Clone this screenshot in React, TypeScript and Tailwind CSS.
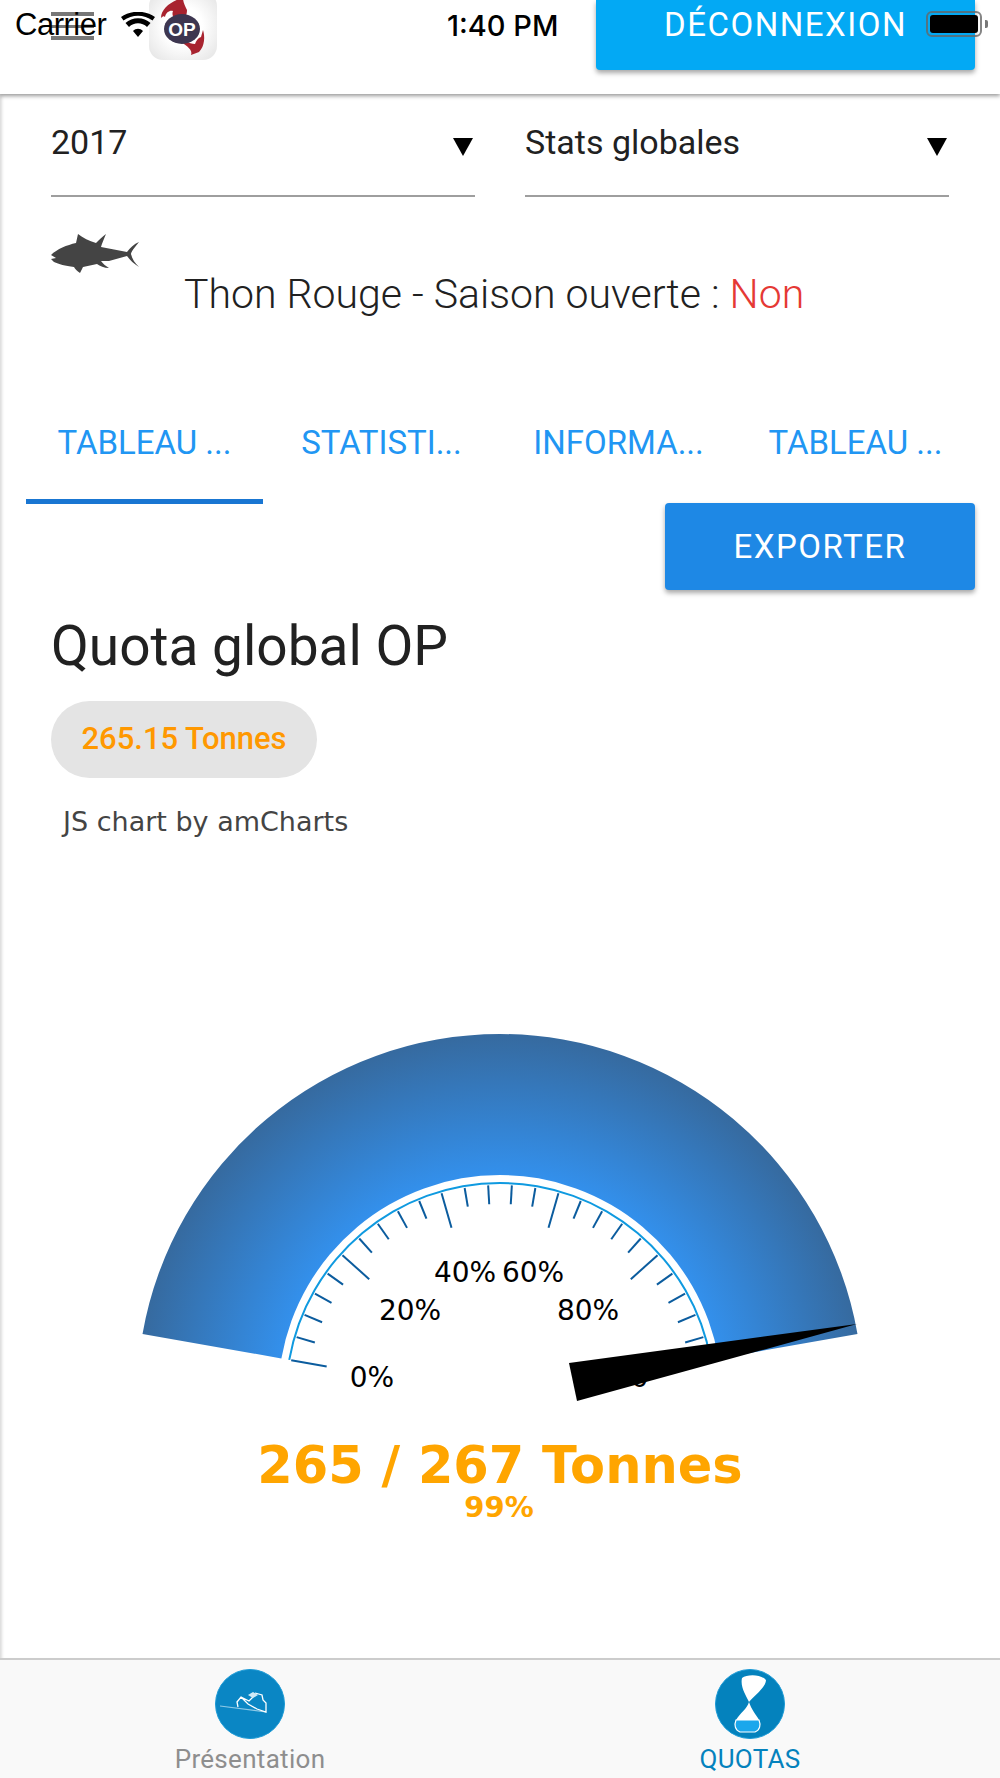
const C = { x: 500, y: 1397 }

function polar(r: number, deg: number) {
  const a = (deg * Math.PI) / 180
  return { x: C.x + r * Math.sin(a), y: C.y - r * Math.cos(a) }
}

function arcBand(outer: number, inner: number, from: number, to: number) {
  const a = polar(outer, from)
  const b = polar(outer, to)
  const c = polar(inner, to)
  const d = polar(inner, from)
  return `M${a.x} ${a.y}A${outer} ${outer} 0 0 1 ${b.x} ${b.y}L${c.x} ${c.y}A${inner} ${inner} 0 0 0 ${d.x} ${d.y}Z`
}

const TOP = 1020
const ticks = Array.from({ length: 26 }, (_, i) => i)
const labels = [
  { t: '0%', x: 372, y: 1387 },
  { t: '20%', x: 410, y: 1320 },
  { t: '40%', x: 465, y: 1282 },
  { t: '60%', x: 533, y: 1282 },
  { t: '80%', x: 588, y: 1320 },
]

function Gauge() {
  return (
    <svg width="1000" height="520" viewBox={`0 ${TOP} 1000 520`} className="block shrink-0">
      <defs>
        <radialGradient id="band" gradientUnits="userSpaceOnUse" cx={C.x} cy={C.y} r="363">
          <stop offset="0.6" stopColor="#3391ee" />
          <stop offset="1" stopColor="#366a9f" />
        </radialGradient>
        <clipPath id="last-label">
          <rect x="560" y="1340" width="90" height="60" />
        </clipPath>
      </defs>
      <path d={arcBand(363, 222, -80, 80)} fill="url(#band)" />
      <path d={arcBand(215, 213, -80, 80)} fill="#0f9ae0" />
      {ticks.map(i => {
        const deg = -80 + i * 6.4
        const major = i % 5 === 0
        const a = polar(212, deg)
        const b = polar(major ? 176 : 193, deg)
        return <line key={i} x1={a.x} y1={a.y} x2={b.x} y2={b.y} stroke="#0b5c9e" strokeWidth="2" />
      })}
      {labels.map(l => (
        <text key={l.t} x={l.x} y={l.y} textAnchor="middle" fontSize="28" fill="#000" fontFamily="'DejaVu Sans', sans-serif">
          {l.t}
        </text>
      ))}
      {/* the needle covers nearly all of this one */}
      <text x="595" y="1387" fontSize="28" fill="#000" clipPath="url(#last-label)" fontFamily="'DejaVu Sans', sans-serif">
        100%
      </text>
      <polygon points="857,1324 569,1363 577,1401" fill="#000" />
      <text x="500" y="1483" textAnchor="middle" fontSize="51" fontWeight="700" fill="#ffa500" fontFamily="'DejaVu Sans', sans-serif">
        265 / 267 Tonnes
      </text>
      <text x="499" y="1517" textAnchor="middle" fontSize="29" fontWeight="700" fill="#ffa500" fontFamily="'DejaVu Sans', sans-serif">
        99%
      </text>
    </svg>
  )
}

function TunaIcon() {
  return (
    <svg width="90" height="41" viewBox="0 0 90 41" fill="#444" className="shrink-0">
      <path d="M0 22 C6 16 16 12 25 10 L27 1 C32 5 38 8 45 10 C48 7 51 4 55 1 C53 6 51 10 50 14 L76 19 C79 15 83 11 88 9 C83 15 80 19 80 21 C81 26 84 30 88 34 C83 31 79 27 76 23 L58 28 L50 28 C52 31 55 33 58 35 C53 35 49 33 46 31 L32 34 L29 40 C26 38 24 36 23 34 C14 33 8 31 3 29 L0 26 L5 25 Z" />
    </svg>
  )
}

function AppIcon() {
  return (
    <div className="w-[68px] h-[68px] rounded-[14px] bg-[radial-gradient(circle,#ffffff_40%,#e2e2e2_100%)] -mt-2">
      <svg width="68" height="68" viewBox="0 0 68 68">
        <path d="M34 6 C24 8 12 16 12 26 C14 24 15 24 16 25 C17 20 21 18 24 19 C22 24 26 28 30 28 C36 26 38 24 38 18 C36 14 34 10 34 6 Z" fill="#a8232f" />
        <path d="M32 42 C34 48 40 52 46 52 C47 49 49 46 52 45 L54 38 C56 44 56 54 50 60 L42 63 C44 58 38 54 32 50 C30 48 30 44 32 42 Z" fill="#a8232f" />
        <ellipse cx="33" cy="37" rx="18" ry="15" fill="#3d3650" />
        <text x="33" y="44" textAnchor="middle" fontSize="19" fontWeight="700" fill="#fff" fontFamily="'Liberation Sans', sans-serif">OP</text>
      </svg>
    </div>
  )
}

function BoatIcon() {
  return (
    <svg width="70" height="70" viewBox="0 0 70 70">
      <circle cx="35" cy="35" r="34.5" fill="#0a86c4" stroke="#1b9ad6" strokeWidth="1" />
      <path d="M5 37 L51 43" stroke="#8ec9e6" strokeWidth="1.2" fill="none" />
      <path d="M23 38 L22 33 L26 28 L34 32 L38 28 M26 28 L33 35 L42 40 L51 43 L51 34 L48 31 L47 26 L40 24" stroke="#fff" strokeWidth="1.3" fill="none" />
      <path d="M33 26 L38 23 L43 26 L38 29 Z" fill="#cfe9f6" />
    </svg>
  )
}

function HourglassIcon() {
  return (
    <svg width="70" height="70" viewBox="0 0 70 70">
      <circle cx="35" cy="35" r="34.5" fill="#0482bd" stroke="#1b9ad6" strokeWidth="1" />
      <path d="M27 9 C32 5 46 5 51 11 C51 18 40 26 34 33 C31 26 25 18 27 9 Z" fill="#fff" />
      <path d="M34 33 C36 40 42 47 44 51 L21 51 C25 44 32 40 34 33 Z" fill="#fff" />
      <path d="M21 51 L44 51 C46 56 45 61 40 63 L25 63 C20 61 19 56 21 51 Z" fill="#1ba7ec" stroke="#fff" strokeWidth="1.2" />
    </svg>
  )
}

function Select({ label }: { label: string }) {
  return (
    <div className="w-[424px] h-[85px] border-b-2 border-[#9e9e9e] flex items-center justify-between pb-[22px] pr-[2px]">
      <span className="text-[34px] text-[#212121]">{label}</span>
      <span className="mt-[8px] w-0 h-0 border-l-[10px] border-r-[10px] border-t-[18px] border-l-transparent border-r-transparent border-t-black" />
    </div>
  )
}

export default function App() {
  return (
    <div className="relative w-[1000px] h-[1778px] overflow-hidden bg-white font-['Roboto',sans-serif] flex flex-col">
      {/* status bar sits over the app header */}
      <div className="absolute inset-x-0 top-0 h-10 z-10 font-['Liberation_Sans',sans-serif] text-black">
        <span className="absolute left-[15px] top-[8px] text-[31px] leading-[34px] tracking-[-0.5px]">Carrier</span>
        <svg className="absolute left-[121px] top-[12px]" width="34" height="26" viewBox="0 0 34 26">
          <path d="M17 25 L12 19 C15 16 19 16 22 19 Z M8 15 L4.500 11 C11 4.500 23 4.500 29.500 11 L26 15 C21 10 13 10 8 15 Z M2.500 8.500 L0 5 C9 -2 25 -2 34 5 L31.500 8.500 C23 2 11 2 2.500 8.500 Z" fill="#000" />
        </svg>
        <span className="absolute left-[447px] top-[9px] text-[29px] leading-[34px] font-medium font-['Inter',sans-serif]">1:40 PM</span>
        <div className="absolute left-[926px] top-[11px] w-[56px] h-[26px] rounded-[6px] border-2 border-[#666]/80 p-[2px]">
          <div className="w-full h-full rounded-[3px] bg-black" />
        </div>
        <div className="absolute left-[985px] top-[20px] w-[3px] h-[8px] rounded-r-[2px] bg-[#777]" />
      </div>

      <header className="h-[94px] shrink-0 flex items-start pl-[51px] pr-[25px] bg-white shadow-[0_2px_4px_rgba(0,0,0,0.4)] relative">
        <div className="w-[43px] h-[28px] mt-[12px] flex flex-col justify-between">
          <div className="h-[4px] bg-[#777]" />
          <div className="h-[3px] bg-[#777]" />
          <div className="h-[4px] bg-[#777]" />
        </div>
        <div className="ml-[55px]"><AppIcon /></div>
        <button className="ml-auto w-[379px] h-[70px] bg-[#03a9f4] rounded-b-[4px] text-white text-[33px] tracking-[1.5px] pb-[22px] shadow-[0_3px_5px_rgba(0,0,0,0.35)]">
          DÉCONNEXION
        </button>
      </header>

      <main className="flex-1 flex flex-col shadow-[inset_4px_0_3px_-2px_rgba(0,0,0,0.14)]">
        <div className="flex gap-[50px] pl-[51px] pt-[18px]">
          <Select label="2017" />
          <Select label="Stats globales" />
        </div>

        <div className="h-[169px] pl-[51px] pt-[36px] flex items-start">
          <TunaIcon />
          <p className="ml-[43px] mt-[36px] text-[41px] leading-[50px] font-light text-[#212121] whitespace-nowrap">
            Thon Rouge - Saison ouverte : <span className="text-[#e53935]">Non</span>
          </p>
        </div>

        <nav className="mt-[26px] pl-[26px] flex h-[112px]">
          {['TABLEAU ...', 'STATISTI...', 'INFORMA...', 'TABLEAU ...'].map((t, i) => (
            <div
              key={i}
              className={`w-[237px] flex items-center justify-center pt-[2px] pb-[8px] text-[33px] text-[#2196f3] ${i === 0 ? 'border-b-[5px] border-[#1976d2]' : 'border-b-[5px] border-transparent'}`}
            >
              {t}
            </div>
          ))}
        </nav>

        <div className="flex justify-end pr-[25px]">
          <button className="w-[310px] h-[87px] -mt-[1px] bg-[#1e88e5] text-white text-[33px] tracking-[1.5px] rounded-[4px] shadow-[0_3px_5px_rgba(0,0,0,0.35)]">
            EXPORTER
          </button>
        </div>

        <h1 className="pl-[51px] mt-[21px] text-[55px] leading-[70px] text-[#212121]">Quota global OP</h1>

        <div className="pl-[51px] mt-[20px]">
          <span className="inline-flex items-center justify-center w-[266px] h-[77px] rounded-full bg-[#e4e4e4] text-[#ff9800] text-[31px] font-medium">
            265.15 Tonnes
          </span>
        </div>

        <p className="pl-[63px] mt-[26px] text-[27px] leading-[36px] text-[#444] font-['DejaVu_Sans',sans-serif]">JS chart by amCharts</p>

        <div className="mt-[180px]"><Gauge /></div>
      </main>

      <footer className="h-[120px] shrink-0 bg-[#f9f9f9] border-t-2 border-[#cccccc] flex relative">
        <div className="flex-1 flex flex-col items-center pt-[9px]">
          <BoatIcon />
          <span className="text-[26px] leading-[30px] mt-[5px] tracking-[0.3px] text-[#8e8e8e]">Présentation</span>
        </div>
        <div className="flex-1 flex flex-col items-center pt-[9px]">
          <HourglassIcon />
          <span className="text-[26px] leading-[30px] mt-[5px] tracking-[0.3px] text-[#0482bd]">QUOTAS</span>
        </div>
      </footer>
    </div>
  )
}
